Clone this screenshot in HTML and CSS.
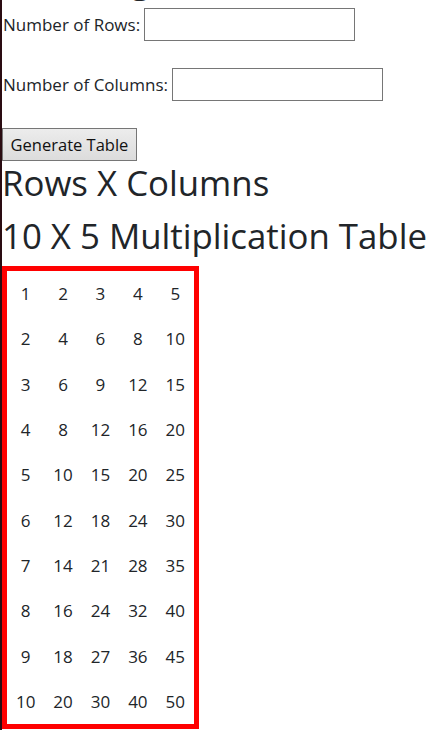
FILE: index.html
```html
<!DOCTYPE html>
<html lang="en">
<head>
<meta charset="utf-8">
<title>Multiplication Table</title>
<link rel="stylesheet" href="styles.css">
</head>
<body>
  <h1 class="title">Counting Tables</h1>
  <div class="form" id="form">
    <div class="field">
      <label for="rows">Number of Rows:</label>
      <input id="rows" type="text">
    </div>
    <div class="field">
      <label for="cols">Number of Columns:</label>
      <input id="cols" type="text">
    </div>
    <button class="btn" type="button">Generate Table</button>
  </div>
  <h2 class="heading">Rows X Columns</h2>
  <h2 class="heading">10 X 5 Multiplication Table</h2>
  <table class="mult">
    <tbody id="tbody"></tbody>
  </table>
  <script src="script.js"></script>
</body>
</html>
```

FILE: styles.css
```css
html, body {
  margin: 0;
  padding: 0;
}
body {
  border-left: 2px solid #2a0c12;
  font-family: "Open Sans", "Noto Sans", sans-serif;
  font-size: 17px;
  color: #212529;
  background: #fff;
  min-height: 100vh;
}
.title {
  font-size: 35px;
  font-weight: 400;
  line-height: 44px;
  margin: 0 0 6px 0;
  white-space: nowrap;
  overflow: hidden;
}
.form {
  display: flex;
  flex-direction: column;
  align-items: flex-start;
}
.field {
  display: flex;
  align-items: center;
  gap: 4px;
  height: 33px;
  margin-bottom: 27px;
}
.field label {
  padding-left: 1px;
  white-space: nowrap;
}
.field input {
  box-sizing: border-box;
  width: 211px;
  height: 33px;
  border: 1px solid #767676;
  border-radius: 0;
  font: inherit;
  padding: 2px 4px;
}
.btn {
  box-sizing: border-box;
  height: 33px;
  width: 135px;
  border: 1px solid #767676;
  border-radius: 0;
  background: linear-gradient(#ececec, #dcdcdc);
  font-family: inherit;
  font-size: 16.5px;
  color: #111;
  padding: 0;
  white-space: nowrap;
}
.heading {
  font-size: 34.8px;
  font-weight: 400;
  line-height: 44.5px;
  margin: 0 0 8px 0;
  white-space: nowrap;
}
.mult {
  border-collapse: collapse;
  border: 5px solid #ff0000;
  margin-bottom: 24px;
}
.mult td {
  width: 37.4px;
  height: 45.3px;
  padding: 0;
  text-align: center;
  vertical-align: middle;
}
```

FILE: script.js
```js
var tbody = document.getElementById('tbody');
for (var r = 1; r <= 10; r++) {
  var tr = document.createElement('tr');
  for (var c = 1; c <= 5; c++) {
    var td = document.createElement('td');
    td.textContent = String(r * c);
    tr.appendChild(td);
  }
  tbody.appendChild(tr);
}
var form = document.getElementById('form');
var y = form.getBoundingClientRect().top + window.scrollY - 8;
window.scrollTo(0, y);
```
